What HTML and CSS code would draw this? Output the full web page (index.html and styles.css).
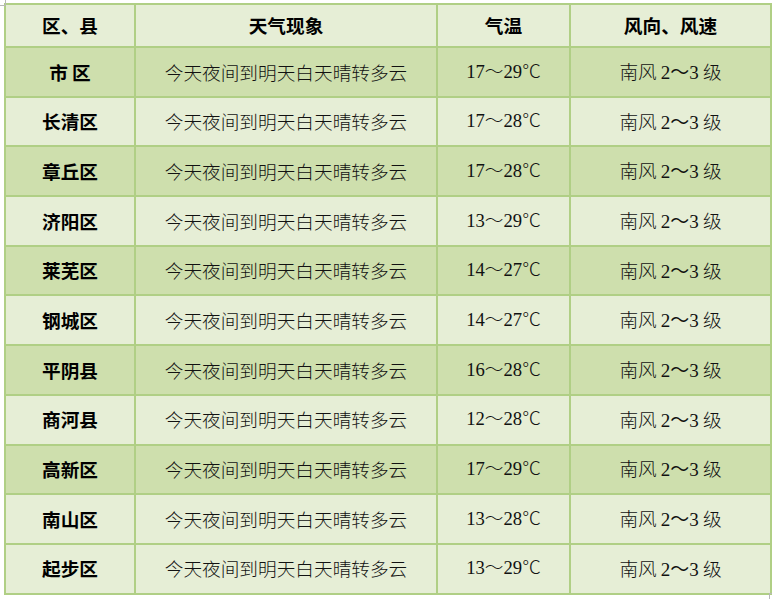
FILE: index.html
```html
<!DOCTYPE html>
<html lang="zh-CN">
<head>
<meta charset="utf-8">
<title>天气预报</title>
<link rel="stylesheet" href="styles.css">
</head>
<body>
<div class="mark mark-tl"></div>
<div class="mark mark-br"></div>
<table class="weather">
  <colgroup>
    <col class="c1"><col class="c2"><col class="c3"><col class="c4">
  </colgroup>
  <thead>
    <tr><th>区、县</th><th>天气现象</th><th>气温</th><th>风向、风速</th></tr>
  </thead>
  <tbody>
    <tr class="dark"><td class="name">市&nbsp;区</td><td>今天夜间到明天白天晴转多云</td><td class="num">17～29℃</td><td>南风 <span class="num">2～3</span> 级</td></tr>
    <tr><td class="name">长清区</td><td>今天夜间到明天白天晴转多云</td><td class="num">17～28℃</td><td>南风 <span class="num">2～3</span> 级</td></tr>
    <tr class="dark"><td class="name">章丘区</td><td>今天夜间到明天白天晴转多云</td><td class="num">17～28℃</td><td>南风 <span class="num">2～3</span> 级</td></tr>
    <tr><td class="name">济阳区</td><td>今天夜间到明天白天晴转多云</td><td class="num">13～29℃</td><td>南风 <span class="num">2～3</span> 级</td></tr>
    <tr class="dark"><td class="name">莱芜区</td><td>今天夜间到明天白天晴转多云</td><td class="num">14～27℃</td><td>南风 <span class="num">2～3</span> 级</td></tr>
    <tr><td class="name">钢城区</td><td>今天夜间到明天白天晴转多云</td><td class="num">14～27℃</td><td>南风 <span class="num">2～3</span> 级</td></tr>
    <tr class="dark"><td class="name">平阴县</td><td>今天夜间到明天白天晴转多云</td><td class="num">16～28℃</td><td>南风 <span class="num">2～3</span> 级</td></tr>
    <tr><td class="name">商河县</td><td>今天夜间到明天白天晴转多云</td><td class="num">12～28℃</td><td>南风 <span class="num">2～3</span> 级</td></tr>
    <tr class="dark"><td class="name">高新区</td><td>今天夜间到明天白天晴转多云</td><td class="num">17～29℃</td><td>南风 <span class="num">2～3</span> 级</td></tr>
    <tr><td class="name">南山区</td><td>今天夜间到明天白天晴转多云</td><td class="num">13～28℃</td><td>南风 <span class="num">2～3</span> 级</td></tr>
    <tr><td class="name">起步区</td><td>今天夜间到明天白天晴转多云</td><td class="num">13～29℃</td><td>南风 <span class="num">2～3</span> 级</td></tr>
  </tbody>
</table>
</body>
</html>
```
FILE: styles.css
```css
html, body {
  margin: 0;
  padding: 0;
  background: #ffffff;
}
body {
  padding: 3px 0 0 4px;
  font-family: "Noto Sans CJK SC", sans-serif;
  color: #111;
  position: relative;
  width: 772px;
  height: 599px;
  box-sizing: border-box;
}
.mark {
  position: absolute;
  width: 5px;
  height: 5px;
  border-color: #b8b8b8;
  border-style: solid;
  border-width: 0;
}
.mark-tl {
  left: 0;
  top: 0;
  border-right-width: 1px;
  border-bottom-width: 1px;
}
.mark-br {
  left: 769px;
  top: 593px;
  border-left-width: 1px;
  border-top-width: 1px;
}
.weather {
  border-collapse: collapse;
  table-layout: fixed;
  width: 766px;
  background: #e6eed6;
}
.c1 { width: 130px; }
.c2 { width: 302px; }
.c3 { width: 133px; }
.c4 { width: 201px; }
.weather th,
.weather td {
  border: 2px solid #b0cf85;
  text-align: center;
  padding: 0;
  font-size: 18.67px;
  line-height: 1;
}
.weather th {
  height: 41px;
  font-weight: 700;
  color: #000;
}
.weather td {
  height: 47.7px;
  font-weight: 300;
  color: #111;
}
.weather td.name {
  font-weight: 700;
  color: #000;
}
.weather tr.dark td {
  background: #cedfad;
}
.num {
  font-family: "Liberation Serif", "Noto Sans CJK SC", serif;
  font-size: 19px;
  font-weight: 400;
}
```
